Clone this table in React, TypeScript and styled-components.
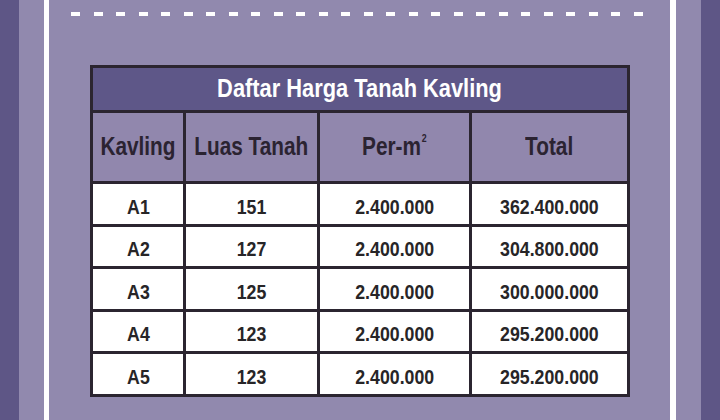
import React from "react";
import styled, { createGlobalStyle } from "styled-components";

const Global = createGlobalStyle`
  html, body { margin: 0; padding: 0; }
  body { width: 720px; height: 420px; overflow: hidden; background: #9189ae; }
  #root { width: 720px; height: 420px; }
`;

const Page = styled.div`
  display: flex;
  width: 720px;
  height: 420px;
  background: #9189ae;
  font-family: "Liberation Sans", Arial, sans-serif;
`;

const Band = styled.div<{ $w: number; $c: string }>`
  flex: 0 0 ${(p) => p.$w}px;
  background: ${(p) => p.$c};
`;

const Main = styled.div`
  flex: 1;
  display: flex;
  flex-direction: column;
  padding-top: 12px;
`;

const Dashes = styled.div`
  display: flex;
  justify-content: space-between;
  height: 4px;
  padding: 0 27px 0 22px;
`;

const Dash = styled.span`
  width: 9px;
  height: 4px;
  background: #ffffff;
`;

const Table = styled.div`
  margin: 49px 40px 0 41px;
  display: grid;
  grid-template-columns: 90px 131px 149px 155px;
  grid-template-rows: 42px 68px repeat(5, 39.5px);
  gap: 3px;
  padding: 3px;
  background: #2b2530;
`;

const Narrow = styled.span<{ $sx: number }>`
  display: inline-block;
  white-space: nowrap;
  transform: scaleX(${(p) => p.$sx});
`;

const Title = styled.div`
  grid-column: 1 / -1;
  background: #5e5788;
  color: #ffffff;
  font-weight: 700;
  font-size: 26px;
  display: flex;
  align-items: center;
  justify-content: center;
  padding-bottom: 2px;
`;

const Head = styled.div`
  background: #9187ad;
  color: #2b2331;
  font-weight: 700;
  font-size: 26px;
  display: flex;
  align-items: center;
  justify-content: center;
  padding-bottom: 1px;
`;

const Cell = styled.div`
  background: #ffffff;
  color: #272527;
  font-weight: 700;
  font-size: 21px;
  display: flex;
  align-items: center;
  justify-content: center;
  padding-top: 6px;
`;

const Sup = styled.sup`
  font-size: 11px;
  position: relative;
  top: -3px;
  margin-left: 1px;
`;

const rows = [
  ["A1", "151", "2.400.000", "362.400.000"],
  ["A2", "127", "2.400.000", "304.800.000"],
  ["A3", "125", "2.400.000", "300.000.000"],
  ["A4", "123", "2.400.000", "295.200.000"],
  ["A5", "123", "2.400.000", "295.200.000"],
];

export default function App() {
  return (
    <>
      <Global />
      <Page>
        <Band $w={19} $c="#5e5686" />
        <Band $w={25} $c="#9189ae" />
        <Band $w={5} $c="#ffffff" />
        <Main>
          <Dashes>
            {Array.from({ length: 26 }).map((_, i) => (
              <Dash key={i} />
            ))}
          </Dashes>
          <Table>
            <Title>
              <Narrow $sx={0.84}>Daftar Harga Tanah Kavling</Narrow>
            </Title>
            <Head>
              <Narrow $sx={0.8}>Kavling</Narrow>
            </Head>
            <Head>
              <Narrow $sx={0.8}>Luas Tanah</Narrow>
            </Head>
            <Head>
              <Narrow $sx={0.8}>
                Per-m<Sup>2</Sup>
              </Narrow>
            </Head>
            <Head>
              <Narrow $sx={0.8}>Total</Narrow>
            </Head>
            {rows.map((r) =>
              r.map((c, j) => (
                <Cell key={r[0] + j}>
                  <Narrow $sx={0.845}>{c}</Narrow>
                </Cell>
              ))
            )}
          </Table>
        </Main>
        <Band $w={6} $c="#ffffff" />
        <Band $w={25} $c="#9189ae" />
        <Band $w={19} $c="#5e5686" />
      </Page>
    </>
  );
}
